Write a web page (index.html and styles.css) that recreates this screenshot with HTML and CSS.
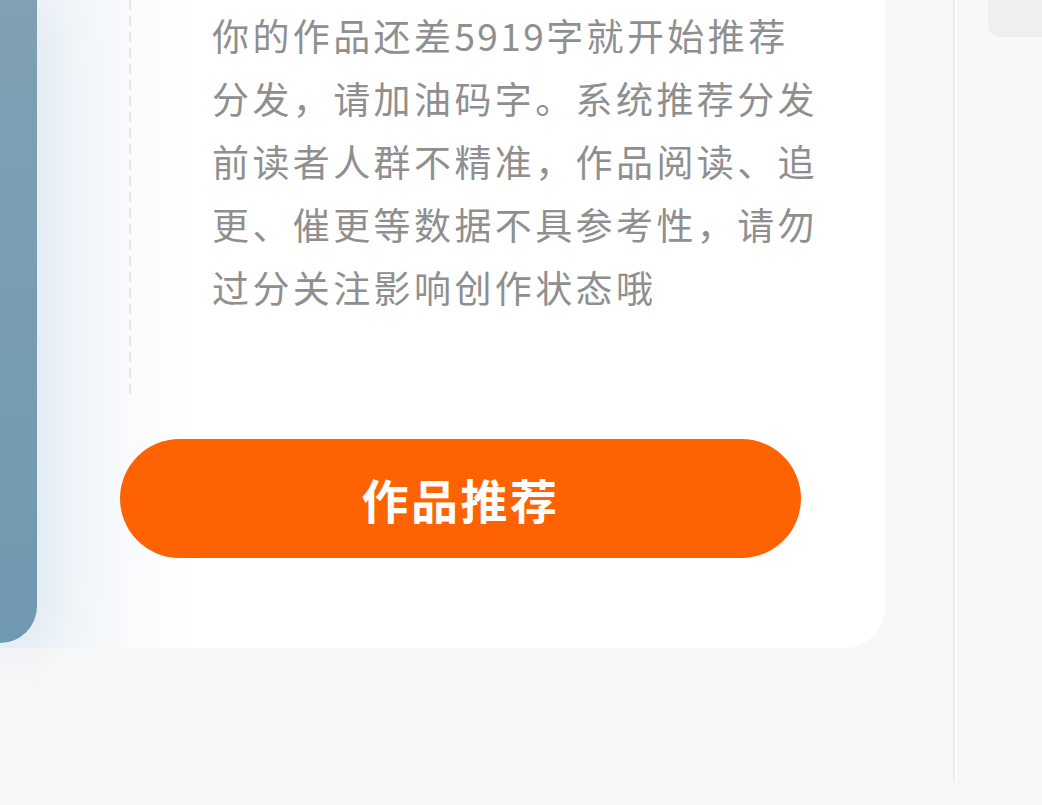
FILE: index.html
```html
<!DOCTYPE html>
<html lang="zh-CN">
<head>
<meta charset="utf-8">
<link rel="stylesheet" href="styles.css">
</head>
<body>
  <div class="stage">
    <div class="panel"></div>
    <div class="content">
      <div class="top">
        <div class="rule"></div>
        <p class="notice">你的作品还差<span class="num">5919</span>字就开始推荐<br>分发，请加油码字。系统推荐分发<br>前读者人群不精准，作品阅读、追<br>更、催更等数据不具参考性，请勿<br>过分关注影响创作状态哦</p>
      </div>
      <button class="btn">作品推荐</button>
    </div>
  </div>
  <div class="divider"></div>
  <div class="side">
    <div class="chip"></div>
  </div>
</body>
</html>
```

FILE: styles.css
```css
html, body {
  margin: 0;
  padding: 0;
}
body {
  width: 1042px;
  height: 805px;
  overflow: hidden;
  background: #f8f8f9;
  display: flex;
  align-items: flex-start;
  font-family: "Noto Sans CJK SC", "Noto Sans", sans-serif;
}
.stage {
  width: 885px;
  height: 648px;
  flex: none;
  display: flex;
  align-items: flex-start;
  background: linear-gradient(to right, #edf3f8 0px, #f3f7fa 90px, #fbfcfd 150px, #ffffff 200px);
  border-bottom-right-radius: 40px;
}
.panel {
  width: 37px;
  height: 643px;
  flex: none;
  background: linear-gradient(to bottom, #80a0b3, #6f99b1);
  border-bottom-right-radius: 40px;
  box-shadow: 0 10px 60px rgba(120, 160, 205, 0.24);
  position: relative;
  z-index: 1;
}
.content {
  flex: 1;
  display: flex;
  flex-direction: column;
}
.top {
  display: flex;
  height: 400px;
}
.rule {
  width: 2px;
  margin-left: 92px;
  background: repeating-linear-gradient(to bottom, #e7e7e7 0 10px, transparent 10px 16px);
}
.notice {
  margin: 0 0 0 81px;
  padding-top: 4px;
  font-size: 37px;
  line-height: 63px;
  letter-spacing: 3.4px;
  color: #8f8f8f;
  white-space: nowrap;
}
.num {
  letter-spacing: 2.4px;
}
.btn {
  margin: 39px 0 0 83px;
  width: 681px;
  height: 119px;
  border: none;
  border-radius: 60px;
  background: #ff6200;
  color: #ffffff;
  font-family: "Noto Sans CJK SC", "Noto Sans", sans-serif;
  font-size: 47px;
  font-weight: 700;
  letter-spacing: 2.5px;
  padding: 0;
}
.divider {
  margin-left: 68px;
  width: 2px;
  height: 782px;
  flex: none;
  background: #ececec;
  border-right: 2px solid #ffffff;
}
.side {
  flex: 1;
  padding-left: 31px;
}
.chip {
  height: 37px;
  background: #efefef;
  border-bottom-left-radius: 12px;
}
```
